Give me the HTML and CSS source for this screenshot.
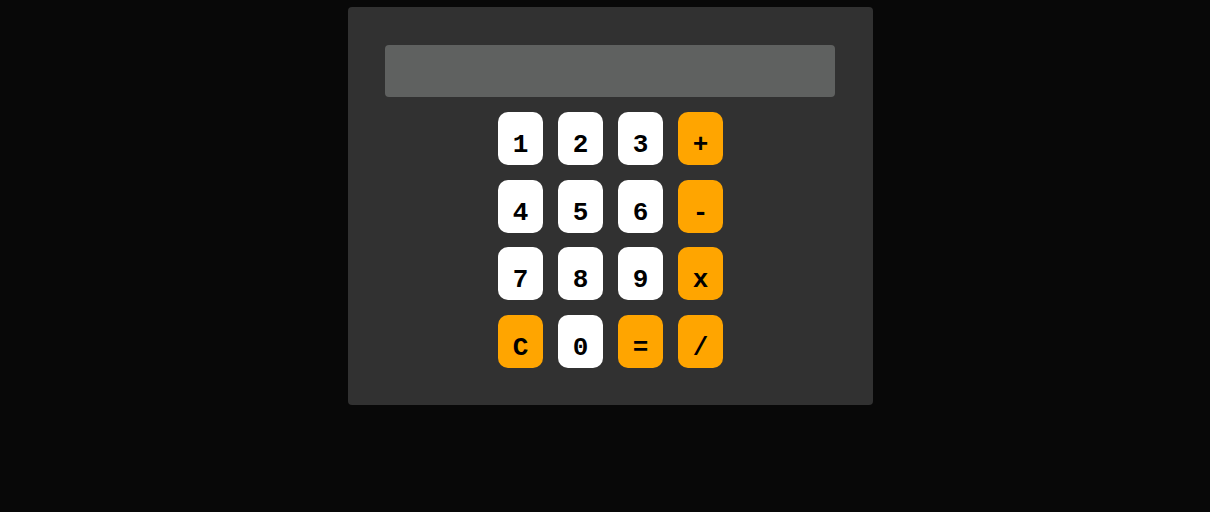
FILE: index.html
```html
<!DOCTYPE html>
<html>
<head>
<meta charset="utf-8">
<link rel="stylesheet" href="styles.css">
</head>
<body>
<div class="calc">
  <div class="display"></div>
  <div class="keys">
    <button class="key">1</button>
    <button class="key">2</button>
    <button class="key">3</button>
    <button class="key op">+</button>
    <button class="key">4</button>
    <button class="key">5</button>
    <button class="key">6</button>
    <button class="key op">-</button>
    <button class="key">7</button>
    <button class="key">8</button>
    <button class="key">9</button>
    <button class="key op">x</button>
    <button class="key op">C</button>
    <button class="key">0</button>
    <button class="key op">=</button>
    <button class="key op">/</button>
  </div>
</div>
</body>
</html>
```
FILE: styles.css
```css
html, body {
  margin: 0;
  background: #080808;
}
.calc {
  box-sizing: border-box;
  width: 525px;
  margin: 7px 0 0 348px;
  padding: 38px 37px 37px 37px;
  background: #313131;
  border-radius: 4px;
}
.display {
  width: 450px;
  height: 52px;
  background: #5f6160;
  border-radius: 4px;
}
.keys {
  display: grid;
  grid-template-columns: repeat(4, 45px);
  grid-auto-rows: 53px;
  column-gap: 15px;
  row-gap: 14.67px;
  justify-content: center;
  margin-top: 15px;
}
.key {
  border: none;
  margin: 0;
  padding: 13px 0 0 0;
  background: #ffffff;
  color: #000;
  border-radius: 10px;
  font-family: "Liberation Mono", monospace;
  font-weight: bold;
  font-size: 26px;
  line-height: 1;
}
.key.op {
  background: #ffa500;
}
```
